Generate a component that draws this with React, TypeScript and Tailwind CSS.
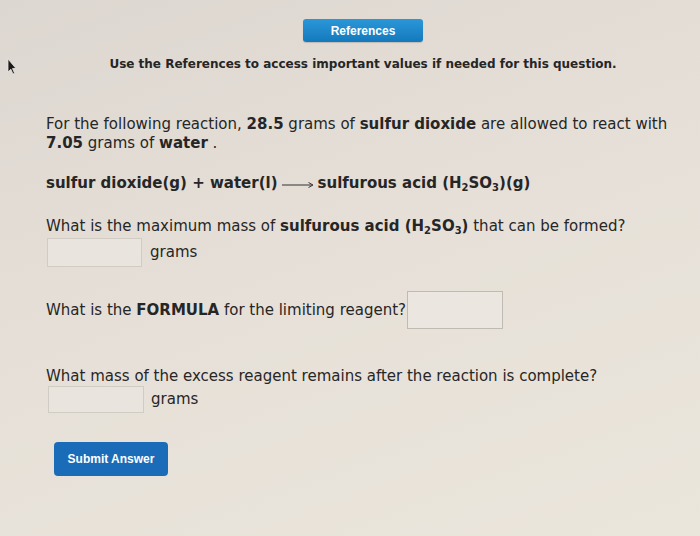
import React from "react";

const font = { fontFamily: '"DejaVu Sans", Verdana, sans-serif' };
const arial = { fontFamily: '"Liberation Sans", Arial, sans-serif' };

function Cursor() {
  return (
    <svg width="12" height="18" viewBox="0 0 12 18" className="absolute left-[6px] top-[58px]">
      <path d="M2 1 L2 14 L4.8 11.2 L7 16 L8.6 15.2 L6.5 10.5 L10 10.5 Z" fill="#1a1a1a" stroke="#e8e4de" strokeWidth="0.8" />
    </svg>
  );
}

function Arrow() {
  return (
    <svg width="32" height="8" viewBox="0 0 32 8" className="inline-block mx-[4px] align-[0px]">
      <path d="M0 5 H30" stroke="#333" strokeWidth="1" />
      <path d="M26.5 2.5 L31 5 L26.5 7.5" stroke="#333" strokeWidth="1" fill="none" />
    </svg>
  );
}

export default function App() {
  return (
    <div
      className="relative w-[700px] h-[536px] overflow-hidden bg-[linear-gradient(160deg,#ddd7d1_0%,#e6e0d8_50%,#ebe6dc_100%)] text-[#262626]"
      style={font}
    >
      <Cursor />
      <div className="flex flex-col">
        <div className="flex justify-center pt-[19px] pl-[26px]">
          <div
            className="w-[120px] h-[23px] rounded-[3px] bg-[linear-gradient(#2a97d8,#1479bd)] flex items-center justify-center text-white text-[12px] font-bold shadow-[0_1px_1px_rgba(0,0,0,0.15)]"
            style={arial}
          >
            References
          </div>
        </div>
        <div className="text-center text-[12px] font-bold mt-[13px] pl-[26px]">
          Use the References to access important values if needed for this question.
        </div>
        <div className="pl-[46px] text-[15px] leading-[19px] mt-[42px]">
          <p>
            For the following reaction, <b>28.5</b> grams of <b>sulfur dioxide</b> are allowed to react with
            <br />
            <b>7.05</b> grams of <b>water</b> .
          </p>
          <p className="mt-[21px] font-bold">
            sulfur dioxide(g) + water(l)
            <Arrow />
            sulfurous acid (H<sub className="text-[10px]">2</sub>SO<sub className="text-[10px]">3</sub>)(g)
          </p>
          <p className="mt-[24px]">
            What is the maximum mass of <b>sulfurous acid (H<sub className="text-[10px]">2</sub>SO<sub className="text-[10px]">3</sub>)</b> that can be formed?
          </p>
          <div className="flex items-center gap-[8px] mt-[2px] ml-[1px]">
            <div className="w-[95px] h-[29px] border border-[#d0cbc3] bg-[#e9e5de]" />
            <span>grams</span>
          </div>
          <div className="flex items-center mt-[24px]">
            <span>
              What is the <b>FORMULA</b> for the limiting reagent?
            </span>
            <div className="w-[96px] h-[38px] border border-[#bfbab2] bg-[#ebe7e0] ml-[1px]" />
          </div>
          <p className="mt-[38px]">What mass of the excess reagent remains after the reaction is complete?</p>
          <div className="flex items-center gap-[7px] ml-[2px]">
            <div className="w-[96px] h-[27px] border border-[#d0cbc3] bg-[#e9e5de]" />
            <span>grams</span>
          </div>
          <div className="mt-[29px] ml-[8px]">
            <div
              className="w-[114px] h-[34px] rounded-[4px] bg-[#1a6cb8] flex items-center justify-center text-white text-[12px] font-bold"
              style={arial}
            >
              Submit Answer
            </div>
          </div>
        </div>
      </div>
    </div>
  );
}
